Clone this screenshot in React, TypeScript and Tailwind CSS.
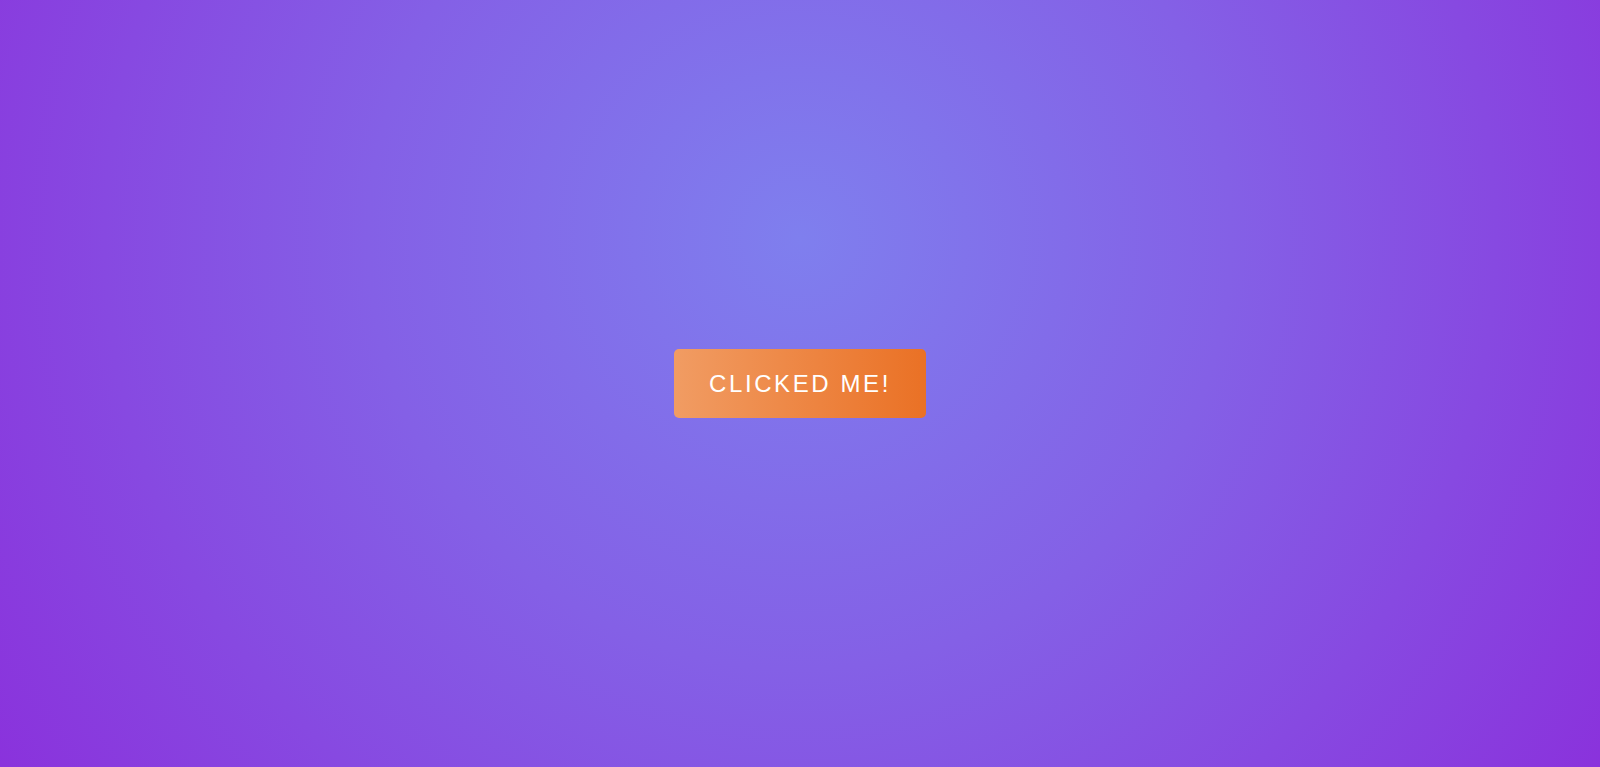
export default function App() {
  return (
    <div className="flex h-screen w-full items-center justify-center bg-[radial-gradient(circle_at_50%_31%,#7f7fee_0%,#8460e6_45%,#8a32dc_100%)]">
      <button
        type="button"
        className="rounded-[5px] bg-[linear-gradient(to_right,#f19c63,#ea7125)] px-[35px] py-[20px] text-[24px] leading-[29px] tracking-[2.6px] text-white uppercase"
        style={{ fontFamily: '"Liberation Sans", Arial, sans-serif' }}
      >
        Clicked me!
      </button>
    </div>
  )
}
